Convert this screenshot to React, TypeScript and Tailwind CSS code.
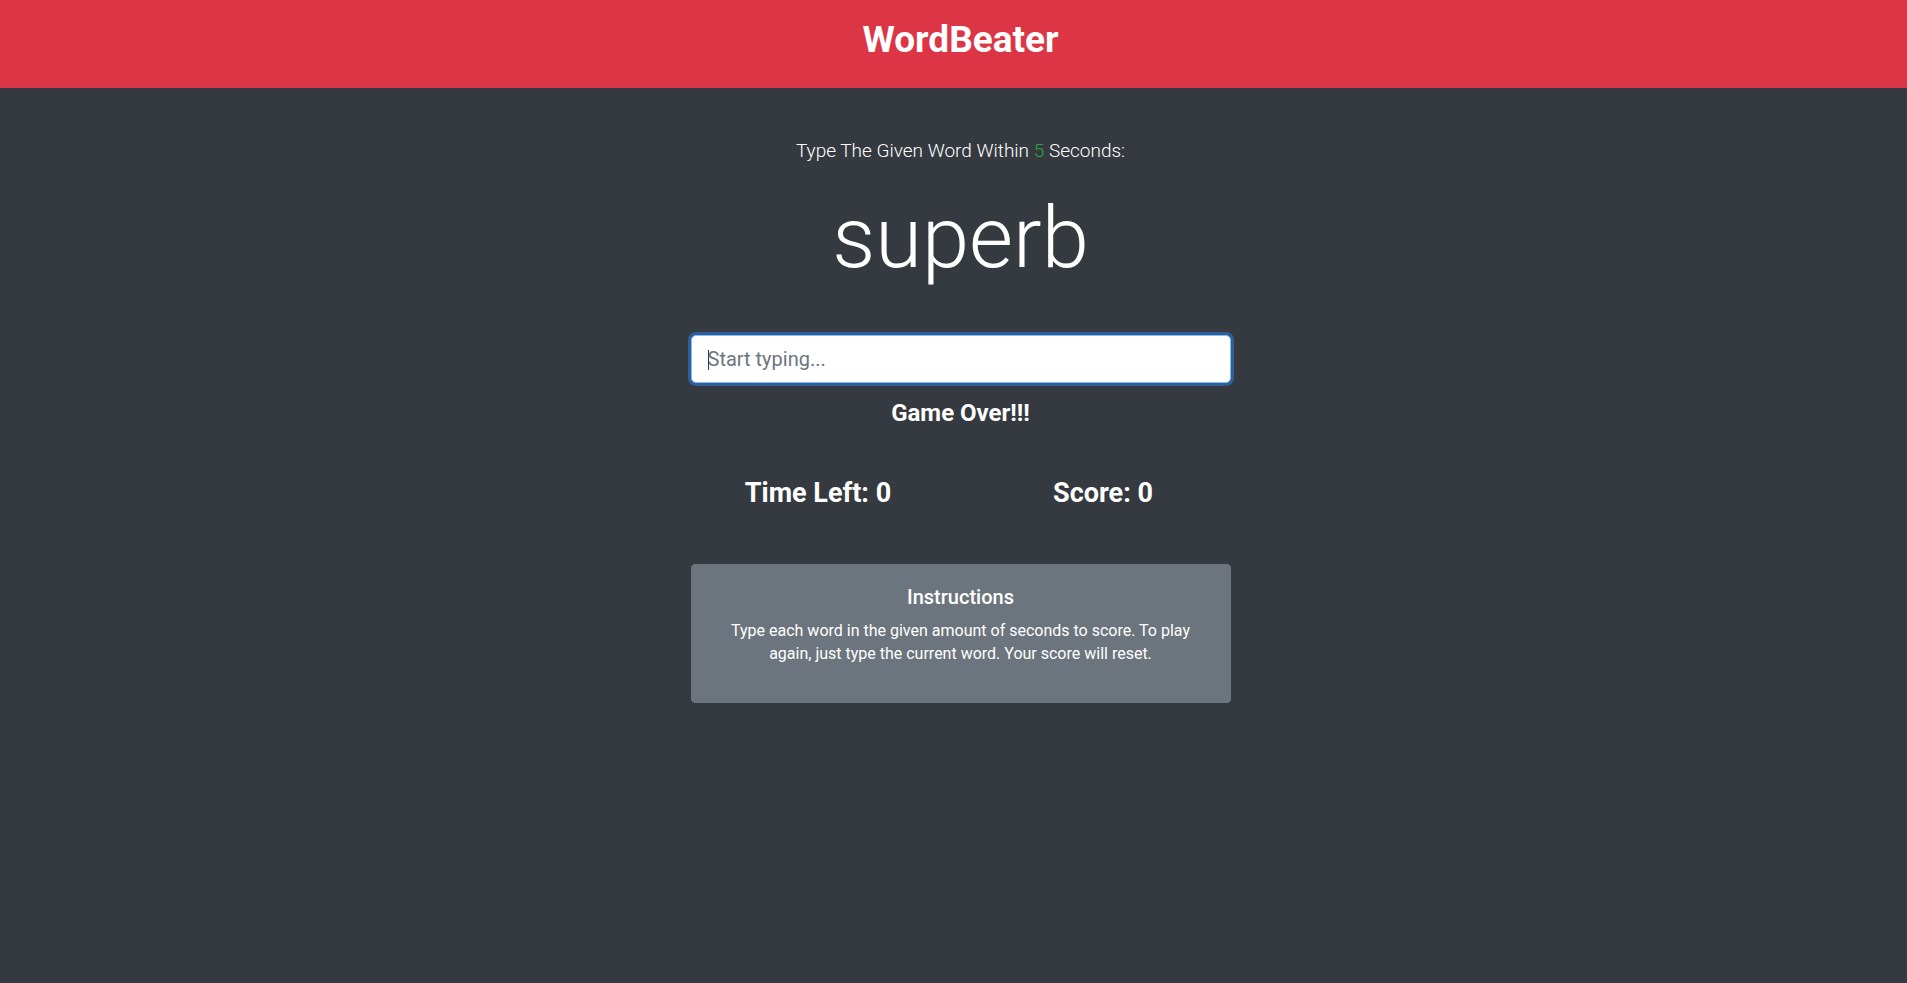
import React from "react";

const font = { fontFamily: "Roboto, 'Liberation Sans', sans-serif" };

const App = () => {
  return (
    <div className="min-h-screen bg-[#343a40] text-white" style={font}>
      <header className="bg-[#dc3545] h-[88px] pt-[18px] pl-[14px] text-center">
        <h1 className="text-[37px] leading-[44px] font-bold">WordBeater</h1>
      </header>

      <main className="pl-[14px]">
        <div className="w-[540px] mx-auto text-center">
          <p className="mt-[49px] text-[19px] leading-[28px] font-light">
            Type The Given Word Within{" "}
            <span className="text-[#28a745]">5</span> Seconds:
          </p>
          <h2 className="mt-[22px] text-[85px] leading-[102px] font-light">
            superb
          </h2>

          <div className="relative mt-[46px]">
            <input
              type="text"
              placeholder="Start typing..."
              className="block w-full h-[48px] rounded-[5px] border border-[#80bdff] bg-white px-4 text-[20px] text-[#495057] placeholder:text-[#6c757d] shadow-[0_0_0_3px_#2f5f94] outline-none"
            />
            <span className="absolute left-[17px] top-[15px] h-[20px] w-px bg-[#343a40]" />
          </div>

          <h4 className="mt-4 text-[24px] leading-[29px] font-bold">
            Game Over!!!
          </h4>

          <div className="mt-[49px] grid grid-cols-2 -mx-[15px]">
            <h3 className="text-[27px] leading-[32px] font-bold">
              Time Left: 0
            </h3>
            <h3 className="text-[27px] leading-[32px] font-bold">
              Score: 0
            </h3>
          </div>

          <div className="mt-[55px] rounded border border-[#6c757d] bg-[#6c757d] px-5 pt-5 pb-[37px]">
            <h5 className="text-[20px] leading-[24px] font-medium">
              Instructions
            </h5>
            <p className="mt-[10px] text-[16px] leading-[23px]">
              Type each word in the given amount of seconds to score. To play
              again, just type the current word. Your score will reset.
            </p>
          </div>
        </div>
      </main>
    </div>
  );
};

export default App;
